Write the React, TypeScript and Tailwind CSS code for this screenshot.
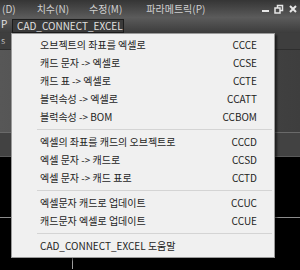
const font = { fontFamily: '"Noto Sans CJK KR", "Noto Sans", sans-serif' };

type Item = { label: string; key: string } | "sep";

const items: Item[] = [
  { label: "오브젝트의 좌표를 엑셀로", key: "CCCE" },
  { label: "캐드 문자 -> 엑셀로", key: "CCSE" },
  { label: "캐드 표 -> 엑셀로", key: "CCTE" },
  { label: "블럭속성 -> 엑셀로", key: "CCATT" },
  { label: "블럭속성 -> BOM", key: "CCBOM" },
  "sep",
  { label: "엑셀의 좌표를 캐드의 오브젝트로", key: "CCCD" },
  { label: "엑셀 문자 -> 캐드로", key: "CCSD" },
  { label: "엑셀 문자 -> 캐드 표로", key: "CCTD" },
  "sep",
  { label: "엑셀문자 캐드로 업데이트", key: "CCUC" },
  { label: "캐드문자 엑셀로 업데이트", key: "CCUE" },
  "sep",
  { label: "CAD_CONNECT_EXCEL 도움말", key: "" },
];

function MenuBar() {
  return (
    <div className="flex h-[17px] items-center bg-gradient-to-b from-[#353535] to-[#5a5a5a] text-[10px] text-[#d0d0d0]">
      <span className="ml-[2px]">(D)</span>
      <span className="ml-[21px]">치수(N)</span>
      <span className="ml-[20px]">수정(M)</span>
      <span className="ml-[24px]">파라메트릭(P)</span>
      <div className="ml-auto mr-[3px] flex items-center gap-[5px] text-[#e6e6e6]">
        <span className="mt-[5px] h-[2px] w-[7px] bg-[#e6e6e6]" />
        <svg width="10" height="10" viewBox="0 0 10 10" fill="none" stroke="#e6e6e6" strokeWidth="1.5">
          <rect x="1" y="4" width="5" height="5" />
          <path d="M3.5 4V1.5H8.5V6.5H6" />
        </svg>
        <svg width="8" height="8" viewBox="0 0 8 8" stroke="#e6e6e6" strokeWidth="2">
          <path d="M1 1L7 7M7 1L1 7" />
        </svg>
      </div>
    </div>
  );
}

function ToolBar() {
  return (
    <div className="flex h-[16px] items-end bg-gradient-to-b from-[#5c5c5c] to-[#3c3c3c] text-[10px] text-[#e0e0e0]">
      <span className="mb-[2px] w-[12px] pl-[1px]">P</span>
      <div className="flex h-[14px] w-[112px] items-center border border-[#1c1c1c] bg-[#3a3a3a] pl-[4px] leading-none">
        CAD_CONNECT_EXCEL
      </div>
    </div>
  );
}

function Menu() {
  return (
    <div className="absolute left-[11px] top-[33px] w-[264px] border border-[#9a9a9a] bg-[#f0f0f0] py-[2px] text-[10px] text-[#1e1e1e] shadow-[2px_2px_2px_rgba(0,0,0,0.55)]">
      {items.map((it, i) =>
        it === "sep" ? (
          <div key={i} className="flex h-[7px] items-center pl-[25px] pr-[2px]">
            <div className="h-px w-full bg-[#d4d4d4]" />
          </div>
        ) : (
          <div key={i} className="flex h-[18px] items-center justify-between pl-[28px] pr-[17px] leading-none">
            <span>{it.label}</span>
            <span>{it.key}</span>
          </div>
        )
      )}
    </div>
  );
}

export default function App() {
  return (
    <div className="relative h-[270px] w-[300px] overflow-hidden bg-black" style={font}>
      <MenuBar />
      <ToolBar />
      <div className="flex h-[17px] items-center border-b border-[#2e2e2e] bg-[#3e3e3e] text-[9px] text-[#bbb]">
        <span className="pl-[1px]">s</span>
      </div>
      <div className="h-[82px] bg-gradient-to-r from-[#575757] to-[#3e3e3e]" />
      <div className="h-[25px] border-y border-t-[#6a6a6a] border-b-[#5a5a5a] bg-[#424242]" />
      <div className="relative flex-1">
        <svg width="300" height="112" className="block">
          <line x1="0" y1="60.5" x2="300" y2="60.5" stroke="#8c8c8c" strokeWidth="1" />
          <line x1="72.5" y1="60" x2="72.5" y2="112" stroke="#9c9c9c" strokeWidth="1" />
        </svg>
      </div>
      <Menu />
    </div>
  );
}
